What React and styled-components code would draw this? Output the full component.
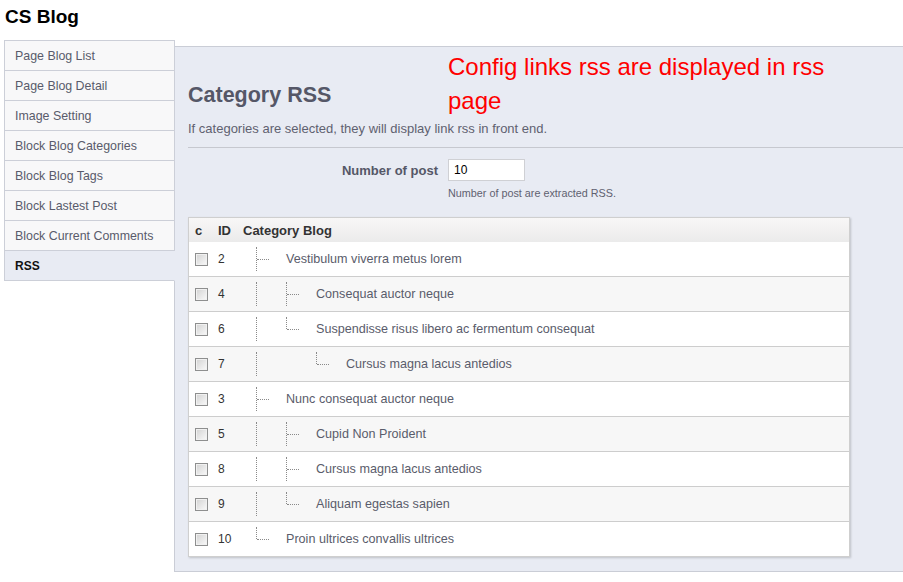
import React from 'react'
import styled, { createGlobalStyle, css } from 'styled-components'

const GlobalStyle = createGlobalStyle`
  body {
    margin: 0;
    background: #fff;
    font-family: "Liberation Sans", Arial, sans-serif;
    overflow: hidden;
  }
`

const Page = styled.div`
  width: 903px;
  height: 582px;
  overflow: hidden;
`

const Title = styled.h1`
  margin: 6px 0 0 5px;
  font-size: 19px;
  line-height: 22px;
  font-weight: bold;
  color: #000;
`

const Body = styled.div`
  display: flex;
  align-items: flex-start;
  margin-top: 12px;
`

const Sidebar = styled.ul`
  list-style: none;
  margin: 0 0 0 4px;
  padding: 0;
  width: 171px;
  flex-shrink: 0;
  position: relative;
  z-index: 1;
`

const NavItem = styled.li`
  box-sizing: border-box;
  height: 30px;
  line-height: 28px;
  padding: 1px 0 0 10px;
  font-size: 12.4px;
  color: #595b6b;
  background: #f8f8f9;
  border: 1px solid #cccfd8;
  border-top: none;
  &:first-child {
    height: 31px;
    border-top: 1px solid #cccfd8;
  }
  ${(p) =>
    p.$active &&
    css`
      background: #e8ebf3;
      color: #111;
      font-weight: bold;
      font-size: 12px;
      border-right-color: #e8ebf3;
    `}
`

const Panel = styled.div`
  position: relative;
  flex: 1;
  margin: 6px 0 0 -1px;
  padding: 35px 0 14px 13px;
  background: #e8ebf3;
  border-top: 1px solid #cacdd6;
  border-left: 1px solid #cacdd6;
  border-bottom: 1px solid #cacdd6;
`

const Note = styled.p`
  position: absolute;
  top: 3px;
  left: 273px;
  width: 400px;
  margin: 0;
  font-size: 24px;
  line-height: 34px;
  color: #ff0000;
`

const Heading = styled.h2`
  margin: 0;
  font-size: 21.5px;
  line-height: 26px;
  font-weight: bold;
  color: #555767;
`

const Intro = styled.p`
  margin: 13px 0 0;
  font-size: 13px;
  line-height: 16px;
  color: #5f6170;
`

const Separator = styled.hr`
  margin: 10px 0 0;
  border: none;
  border-top: 1px solid #c6c8cf;
  height: 0;
`

const FormRow = styled.div`
  display: grid;
  grid-template-columns: 250px auto;
  column-gap: 10px;
  align-items: start;
  margin-top: 11px;
`

const Label = styled.label`
  text-align: right;
  font-size: 13px;
  font-weight: bold;
  line-height: 21px;
  padding-top: 1px;
  color: #555767;
`

const Field = styled.div`
  display: flex;
  flex-direction: column;
  align-items: flex-start;
`

const TextInput = styled.input`
  box-sizing: border-box;
  width: 77px;
  height: 22px;
  margin: 0;
  padding: 0 5px;
  border: 1px solid #cfd0d4;
  background: #fff;
  font-family: inherit;
  font-size: 12px;
  color: #000;
  outline: none;
`

const Hint = styled.span`
  margin-top: 6px;
  font-size: 10.8px;
  line-height: 13px;
  color: #5f6170;
`

const Table = styled.div`
  width: 662px;
  box-sizing: border-box;
  margin-top: 17px;
  border: 1px solid #cfcfcf;
  background: #fff;
  box-shadow: 1px 1px 2px rgba(0, 0, 0, 0.18);
`

const Row = styled.div`
  display: grid;
  grid-template-columns: 23px 25px 1fr;
  align-items: center;
  padding: 0 0 1px 6px;
  box-sizing: border-box;
  height: 35px;
  border-bottom: 1px solid #cdcdcd;
  background: ${(p) => (p.$alt ? '#f7f7f7' : '#fff')};
  font-size: 12.6px;
  color: #5a5c6b;
  &:last-child {
    border-bottom: none;
    height: 34px;
  }
`

const HeadRow = styled(Row)`
  height: 24px;
  padding: 1px 0 0 6px;
  border-bottom: none;
  background: linear-gradient(#f8f7f7, #ebebeb);
  font-size: 13px;
  font-weight: bold;
  color: #333;
`

const IdCell = styled.span`
  color: #333;
  font-size: 12px;
`

const Check = styled.input.attrs({ type: 'checkbox' })`
  appearance: none;
  box-sizing: border-box;
  width: 13px;
  height: 13px;
  margin: 2px 0 0;
  border: 1px solid #8e8f8f;
  background: linear-gradient(135deg, #d2d2d2, #fafafa);
  box-shadow: inset 0 0 0 1px #f1f1f1;
`

const CategoryCell = styled.div`
  display: flex;
  align-items: center;
  padding-left: 13px;
  height: 100%;
`

const TreeCell = styled.span`
  position: relative;
  width: 30px;
  height: 24px;
  flex-shrink: 0;
  margin-top: 1px;
  &::before {
    content: '';
    position: absolute;
    left: 0;
    top: 0;
    height: ${(p) => (p.$kind === 'end' ? '12px' : '24px')};
    border-left: ${(p) => (p.$kind === 'blank' ? 'none' : '1px dotted #8a8a8a')};
  }
  &::after {
    content: '';
    position: absolute;
    left: 1px;
    top: 12px;
    width: 12px;
    border-top: ${(p) => (p.$kind === 'tee' || p.$kind === 'end' ? '1px dotted #8a8a8a' : 'none')};
  }
`

const menu = [
  'Page Blog List',
  'Page Blog Detail',
  'Image Setting',
  'Block Blog Categories',
  'Block Blog Tags',
  'Block Lastest Post',
  'Block Current Comments',
  'RSS',
]

const categories = [
  { id: 2, name: 'Vestibulum viverra metus lorem', tree: ['tee'] },
  { id: 4, name: 'Consequat auctor neque', tree: ['line', 'tee'] },
  { id: 6, name: 'Suspendisse risus libero ac fermentum consequat', tree: ['line', 'end'] },
  { id: 7, name: 'Cursus magna lacus antedios', tree: ['line', 'blank', 'end'] },
  { id: 3, name: 'Nunc consequat auctor neque', tree: ['tee'] },
  { id: 5, name: 'Cupid Non Proident', tree: ['line', 'tee'] },
  { id: 8, name: 'Cursus magna lacus antedios', tree: ['line', 'tee'] },
  { id: 9, name: 'Aliquam egestas sapien', tree: ['line', 'end'] },
  { id: 10, name: 'Proin ultrices convallis ultrices', tree: ['end'] },
]

function App() {
  return (
    <Page>
      <GlobalStyle />
      <Title>CS Blog</Title>
      <Body>
        <Sidebar>
          {menu.map((item) => (
            <NavItem key={item} $active={item === 'RSS'}>
              {item}
            </NavItem>
          ))}
        </Sidebar>
        <Panel>
          <Note>Config links rss are displayed in rss page</Note>
          <Heading>Category RSS</Heading>
          <Intro>If categories are selected, they will display link rss in front end.</Intro>
          <Separator />
          <FormRow>
            <Label>Number of post</Label>
            <Field>
              <TextInput defaultValue="10" />
              <Hint>Number of post are extracted RSS.</Hint>
            </Field>
          </FormRow>
          <Table>
            <HeadRow>
              <span>c</span>
              <span>ID</span>
              <span>Category Blog</span>
            </HeadRow>
            {categories.map((cat, i) => (
              <Row key={cat.id} $alt={i % 2 === 1}>
                <Check />
                <IdCell>{cat.id}</IdCell>
                <CategoryCell>
                  {cat.tree.map((kind, j) => (
                    <TreeCell key={j} $kind={kind} />
                  ))}
                  <span>{cat.name}</span>
                </CategoryCell>
              </Row>
            ))}
          </Table>
        </Panel>
      </Body>
    </Page>
  )
}

export default App
